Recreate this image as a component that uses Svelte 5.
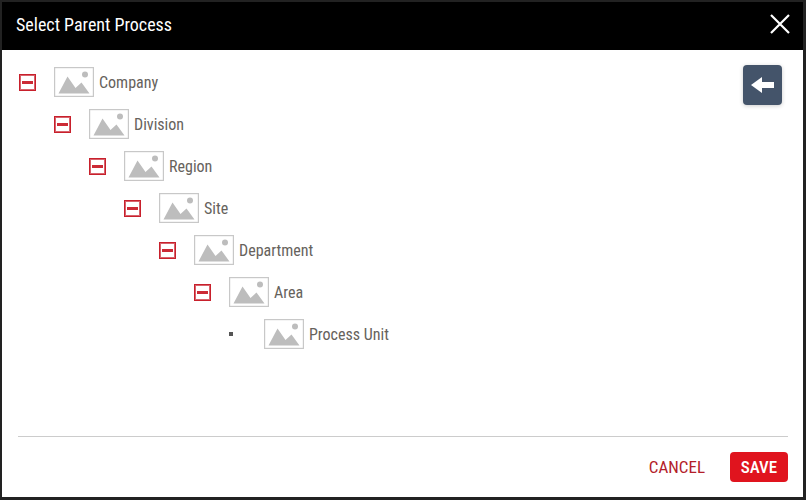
<script>
  const levels = ['Company', 'Division', 'Region', 'Site', 'Department', 'Area', 'Process Unit'];
</script>

{#snippet thumb()}
  <svg class="thumb" width="40" height="30" viewBox="0 0 40 30" aria-hidden="true">
    <rect x="0.6" y="0.6" width="38.8" height="28.8" fill="#fff" stroke="#c8c8c8" stroke-width="1.2" />
    <path d="M4.5 26.5 L13.5 9.5 L21.5 21 L27.5 15.5 L35.5 26.5 Z" fill="#bdbdbd" />
    <circle cx="31" cy="7.5" r="3" fill="#bdbdbd" />
  </svg>
{/snippet}

{#snippet node(i)}
  <li>
    <div class="row">
      {#if i < levels.length - 1}
        <span class="toggle"><span class="minus"></span></span>
      {:else}
        <span class="leaf"><span class="dot"></span></span>
      {/if}
      {@render thumb()}
      <span class="label">{levels[i]}</span>
    </div>
    {#if i < levels.length - 1}
      <ul class="nested">{@render node(i + 1)}</ul>
    {/if}
  </li>
{/snippet}

<div class="dialog">
  <header class="head">
    <h1>Select Parent Process</h1>
    <button class="close" aria-label="Close">
      <svg width="20" height="20" viewBox="0 0 20 20"><path d="M1 1 L19 19 M19 1 L1 19" stroke="#fff" stroke-width="2.2" fill="none" /></svg>
    </button>
  </header>
  <main class="body">
    <ul class="tree">{@render node(0)}</ul>
    <button class="back" aria-label="Back">
      <svg width="24" height="18" viewBox="0 0 24 18"><path d="M0 9 L11 1 V6 H23 V12 H11 V17 Z" fill="#fff" /></svg>
    </button>
  </main>
  <footer class="foot">
    <button class="cancel">CANCEL</button>
    <button class="save">SAVE</button>
  </footer>
</div>

<style>
  :global(body) { margin: 0; background: #fff; }
  .dialog {
    box-sizing: border-box;
    width: 806px;
    height: 500px;
    border: 2px solid #222;
    border-right-width: 3px;
    border-bottom-width: 3px;
    display: flex;
    flex-direction: column;
    font-family: Roboto, sans-serif;
    font-stretch: 85%;
    background: #fff;
  }
  .head {
    height: 48px;
    flex: none;
    background: #000;
    display: flex;
    align-items: center;
    justify-content: space-between;
    padding: 0 13px 0 14px;
  }
  h1 {
    margin: -3px 0 0;
    font-size: 18px;
    font-weight: 400;
    color: #fff;
  }
  .close {
    background: none;
    border: 0;
    padding: 0;
    width: 20px;
    height: 20px;
    margin-top: -4px;
    display: flex;
    align-items: center;
    justify-content: center;
  }
  .body {
    flex: 1;
    position: relative;
    padding: 17px 0 0 17px;
    min-height: 0;
  }
  ul { list-style: none; margin: 0; padding: 0; }
  .nested { padding-left: 35px; }
  .row {
    display: flex;
    align-items: center;
    height: 30px;
    margin-bottom: 12px;
  }
  .toggle {
    box-sizing: border-box;
    width: 17px;
    height: 17px;
    border: 1px solid #c8202c;
    box-shadow: inset 0 0 0 1px #d8636c;
    display: flex;
    align-items: center;
    justify-content: center;
    margin-right: 18px;
  }
  .minus { width: 11px; height: 3px; background: #cc2a35; }
  .leaf {
    width: 35px;
    display: flex;
  }
  .dot { width: 4px; height: 4px; background: #555; }
  .thumb { flex: none; }
  .label {
    margin-left: 5px;
    font-size: 16px;
    color: #66625c;
  }
  .back {
    position: absolute;
    top: 15px;
    right: 21px;
    width: 39px;
    height: 40px;
    border: 0;
    border-radius: 4px;
    padding: 0;
    background: #44546a;
    box-shadow: 0 1px 4px rgba(0, 0, 0, 0.2);
    display: flex;
    align-items: center;
    justify-content: center;
  }
  .foot {
    flex: none;
    margin: 0 15px 0 16px;
    height: 61px;
    border-top: 1px solid #ccc;
    display: flex;
    align-items: flex-start;
    justify-content: flex-end;
    gap: 25px;
    padding-top: 15px;
    box-sizing: border-box;
  }
  button { font-family: inherit; font-stretch: inherit; cursor: pointer; }
  .cancel {
    background: none;
    border: 0;
    padding: 0;
    height: 30px;
    font-size: 17px;
    color: #b3202a;
  }
  .save {
    width: 58px;
    height: 30px;
    border: 0;
    border-radius: 4px;
    padding: 0;
    background: #e0141e;
    color: #fff;
    font-size: 17px;
    font-weight: 500;
  }
</style>
